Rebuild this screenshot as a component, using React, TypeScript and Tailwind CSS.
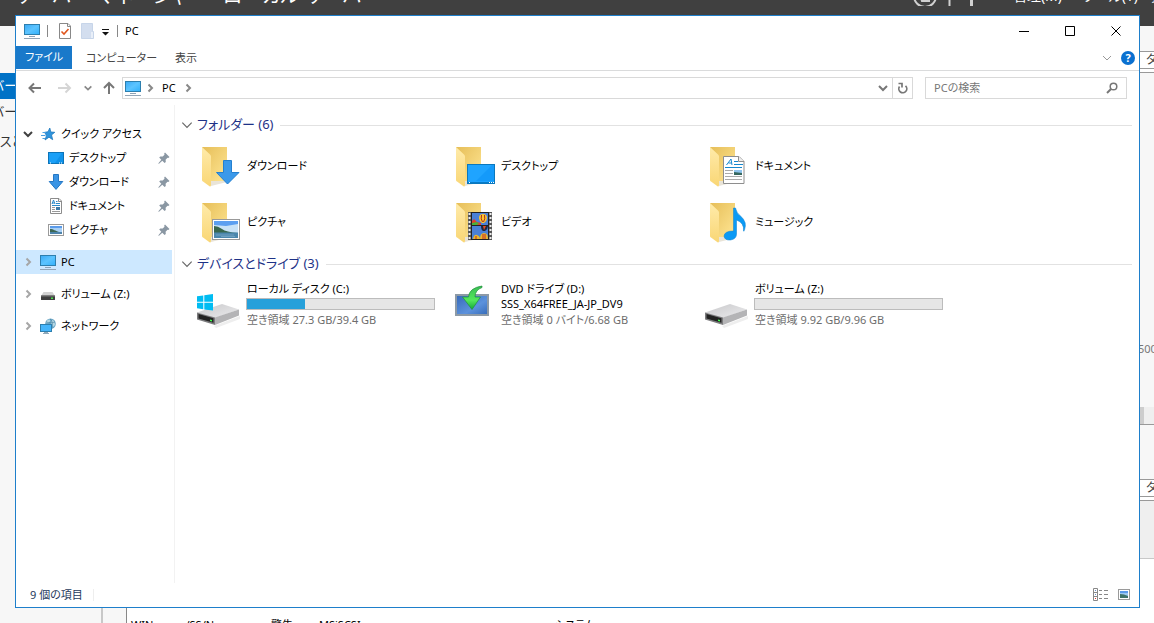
import React, { ReactNode } from 'react';

const PcIcon = ({ className = 'w-4 h-4' }: { className?: string }) => (
  <svg className={className} viewBox="0 0 16 16" aria-hidden="true">
    <defs>
      <linearGradient id="scr" x1="0" y1="0" x2="1" y2="1">
        <stop offset="0" stopColor="#3aa9f5" />
        <stop offset="0.5" stopColor="#5cc4ff" />
        <stop offset="1" stopColor="#2fb0fb" />
      </linearGradient>
    </defs>
    <rect x="0.5" y="1.5" width="15" height="10" fill="url(#scr)" stroke="#2d7fae" />
    <rect x="5" y="13" width="6" height="1" fill="#8fa3b5" />
    <rect x="0" y="15" width="16" height="1" fill="#93a5b6" />
  </svg>
);

const DesktopIcon = () => (
  <svg className="h-4 w-4" viewBox="0 0 16 16" aria-hidden="true">
    <rect x="0.5" y="2.5" width="15" height="11" fill="#1ba0f7" stroke="#0d74b8" />
    <path d="M7 13 14 3h1v10z" fill="#0f92ea" />
    <path d="M2 13h1M11 13h1M13 13h1" stroke="#fff" />
  </svg>
);

const ArrowDownIcon = () => (
  <svg className="h-4 w-4" viewBox="0 0 16 16" aria-hidden="true">
    <path d="M5.5.5h5v7h4.3L8 15.4 1.200 7.500H5.500z" fill="#3a94e4" stroke="#2577c4" />
  </svg>
);

const DocumentIcon = () => (
  <svg className="h-4 w-4" viewBox="0 0 16 16" aria-hidden="true">
    <path d="M2.500.5h8.500l2.500 2.500v12.500h-11z" fill="#fff" stroke="#8c8c8c" />
    <path d="M10.500.5v3h3" fill="none" stroke="#8c8c8c" />
    <path d="m4 6 1.500-4L7 6M4 5h2.500M8 3.500h1.500M8 5.500h4M4 7.500h8" stroke="#2b8ac9" fill="none" />
    <path d="M4 9.500h3M4 11.500h3M4 13.500h8" stroke="#999" />
    <rect x="8" y="9" width="4" height="3" fill="#3d7ba8" />
  </svg>
);

const PictureIcon = ({ className = 'w-4 h-4' }: { className?: string }) => (
  <svg className={className} viewBox="0 0 16 16" aria-hidden="true">
    <rect x="0.5" y="2.500" width="15" height="11" fill="#fff" stroke="#9a9a9a" />
    <rect x="2" y="4" width="12" height="8" fill="#a9d0f5" />
    <path d="M2 4h12v2H2z" fill="#5b9bea" />
    <path d="M2 7c4 0 5 2 9 3H2z" fill="#3c6755" />
    <path d="M2 10h12v2H2z" fill="#4c83ab" />
  </svg>
);

const DriveIcon = () => (
  <svg className="h-4 w-4" viewBox="0 0 16 16" aria-hidden="true">
    <path d="M3.500 6h9L15 10H1z" fill="#d2d2d2" />
    <rect x="1" y="9.500" width="14" height="4.500" rx="0.500" fill="#3e3e3e" />
    <rect x="1" y="9.500" width="14" height="1" fill="#777" />
    <rect x="11" y="11.500" width="2" height="1.500" fill="#4be04b" />
  </svg>
);

const NetworkIcon = () => (
  <svg className="h-4 w-4" viewBox="0 0 16 16" aria-hidden="true">
    <circle cx="10.500" cy="5.800" r="5.300" fill="#6aa6c6" />
    <path d="M7 2.500c2-2 4-1 3 1L8 5 6 5zM12 2c2 0 3 3 3 5l-2 2-2-4z" fill="#b4d6e2" />
    <path d="M10 1c3 2 3 7 1 10M6 4c3 1 6 1 9 0" stroke="#467f9e" fill="none" strokeWidth="0.600" />
    <rect x="0.500" y="6.500" width="11" height="7" fill="#45b5fb" stroke="#2d7fae" />
    <path d="M4 14.500h4M3 15.500h6" stroke="#8fa9bb" />
  </svg>
);

const StarIcon = () => (
  <svg className="h-4 w-4" viewBox="0 0 16 16" aria-hidden="true">
    <path d="m9.800 2 1 4 4 .3-3.300 2.600 1.200 4.800-3.700-2.500-4 2.800 1.500-4.500-2-3.200 3.500-.5z" fill="#2e94dd" stroke="#2078bd" strokeWidth="0.800" />
    <path d="M2.500 6.500H6M1 9.500h4.500M2.500 12.500h2.500" stroke="#4a9fe0" />
  </svg>
);

const PinIcon = () => (
  <svg className="h-3 w-3" viewBox="0 0 12 12" aria-hidden="true">
    <path d="M7 .5 11.500 5l-1.200 1-.8-.2-1.900 1.900.2 2.200-1.200 1.100-2.300-2.300L1 11.800l-.8-.2 3.100-3.900L1.200 5.600l1.100-1.200 2.400.2L6.500 2.800l-.3-1.200z" fill="#8a97a3" />
  </svg>
);

const Chevron = ({ dir, className }: { dir: 'right' | 'down'; className: string }) => (
  <svg className={className} viewBox="0 0 12 12" fill="none" stroke="currentColor" aria-hidden="true">
    <path d={dir === 'right' ? 'M4.500 2.500 8 6l-3.500 3.500' : 'M2 4l4 4 4-4'} />
  </svg>
);

const FolderIcon = ({ children }: { children: ReactNode }) => (
  <svg className="h-12 w-12 shrink-0" viewBox="0 0 48 48" aria-hidden="true">
    <defs>
      <linearGradient id="fback" x1="0" y1="0" x2="1" y2="1">
        <stop offset="0" stopColor="#e6be58" />
        <stop offset="1" stopColor="#ffe694" />
      </linearGradient>
      <linearGradient id="ffront" x1="0" y1="0" x2="0" y2="1">
        <stop offset="0" stopColor="#ffebaa" />
        <stop offset="1" stopColor="#f9d675" />
      </linearGradient>
    </defs>
    <path d="M6 5h25v34H14z" fill="url(#fback)" />
    <path d="M14 39h17v1l-16 4z" fill="#e9e4d8" />
    <path d="M6 5l8 7.500q1 1 1 2V43q0 2-1.500 1.200L7 39.500q-1-.5-1-1.500z" fill="url(#ffront)" />
    {children}
  </svg>
);

const art: Record<string, ReactNode> = {
  download: <path d="M27.500 18.500h8v12h7.500L31.500 42 20.500 30.500h7z" fill="#3b99ea" stroke="#2480d0" />,
  desktop: (
    <>
      <rect x="17.500" y="22.500" width="27" height="19" fill="#1fa4ff" stroke="#0b78bd" />
      <path d="M26 39 42 23h2v16z" fill="#149afa" />
      <path d="M18 40.500h26" stroke="#087bc8" />
      <path d="M19 40.500h1M39 40.500h1M41 40.500h1M43 40.500h1" stroke="#fff" />
    </>
  ),
  document: (
    <>
      <path d="M19.500 14.500H35l5 5v22H19.500z" fill="#fff" stroke="#8e8e8e" />
      <path d="M34.500 14.500v5H40" fill="#eee" stroke="#8e8e8e" />
      <path d="m22.500 23 4.500-6 1 6m-3.500-2h3M30 19.500h4M30 22.500h9M21 25.500h17" stroke="#1588cf" fill="none" />
      <path d="M21 28.500h8M21 31.500h8M21 34.500h17M21 37.500h17" stroke="#aaa" />
      <rect x="30" y="28" width="8" height="5" fill="#8fc4ee" />
      <path d="M30 30l8 1v2h-8z" fill="#37685f" />
    </>
  ),
  picture: (
    <>
      <rect x="16.500" y="21.500" width="27" height="20" fill="#fff" stroke="#999" />
      <rect x="18" y="23" width="24" height="17" fill="#c9e2f6" />
      <path d="M18 23h24v3l-12 2-12-1z" fill="#5c9ff0" />
      <path d="M18 28q4 0 8 3t16 4H18z" fill="#38674e" />
      <path d="M18 34.500h24V40H18z" fill="#4b87ad" />
      <path d="M20 37h18M25 38.500h14" stroke="#8ab4cc" strokeWidth="0.600" />
    </>
  ),
  video: (
    <>
      <path d="M18 14h24v28H18z" fill="#555" />
      <path d="M19.500 15v27M40.500 15v27" stroke="#eee" strokeWidth="2" strokeDasharray="2 2" />
      <path d="M21 14h18v28H21z" fill="#222" />
      <path d="M22 15h16v12H22zM22 28h16v13H22z" fill="#4a80d6" />
      <path d="M22 23l2-2 3 3 4 1v2h-9z" fill="#e0402a" />
      <path d="M22 25l5-1 2 2-3 1h-4z" fill="#48b339" />
      <path d="M29 20a4 4 0 1 1 8 0q0 3-3 5h-2q-3-2-3-5z" fill="#ffc52c" />
      <path d="M31.500 17q-1 4 1 7m2-7q1 4-1 7" stroke="#a42e26" fill="none" />
      <path d="M31 28h7q0 3-3 5h-2q-2-1-2-5z" fill="#1d2840" />
      <path d="M33 28l1 4 2-4" fill="#e84b22" />
      <path d="M23 41q1-5 4-4t3 4zM30 41q0-6 4-6t4 6z" fill="#e9b72c" />
      <path d="M33 36v5m2-5v5m-9-3v3" stroke="#c02c26" />
    </>
  ),
  music: (
    <path d="M29.500 10h2q1 5 5 8 7 6 4 14-1 2-1 1 1-8-7-11v14q0 5-6 6-6 .5-6.500-4 .5-5 9.500-5z" fill="#0b9af5" stroke="#087fce" strokeWidth="0.500" />
  ),
};

const BigDrive = ({ windows = false }: { windows?: boolean }) => (
  <svg className="h-12 w-12 shrink-0" viewBox="0 0 48 48" aria-hidden="true">
    <defs>
      <linearGradient id="dtop" x1="0" y1="0" x2="1" y2="1">
        <stop offset="0" stopColor="#c8c8ca" />
        <stop offset="1" stopColor="#ececee" />
      </linearGradient>
    </defs>
    <path d="M18 46 44 36v3L20 48z" fill="#eee" />
    <path d="M1 32.500 26 24l17 5.500L19 38z" fill="url(#dtop)" />
    <path d="M19 37.500 43 29.500v6L19 45z" fill="#b4b4b6" />
    <path d="M1 32.500 19 37.500V45L1 39.500z" fill="#7c7c7e" />
    <path d="M2.500 34 17.500 38.300v4.500L2.500 38.500z" fill="#222" />
    <path d="M14 39.500l2 .5v1.500l-2-.5z" fill="#3dff4d" />
    {windows && (
      <path d="M1 16.300 7.300 15.400v6.400H1zM8.300 15.200 17 14v7.800H8.300zM1 22.800h6.300v6.400L1 28.300zM8.300 22.800H17v7.800l-8.700-1.200z" fill="#00bcf2" />
    )}
  </svg>
);

const DvdIcon = () => (
  <svg className="h-12 w-12 shrink-0" viewBox="0 0 48 48" aria-hidden="true">
    <defs>
      <linearGradient id="dvd" x1="0" y1="0" x2="1" y2="1">
        <stop offset="0" stopColor="#3568b8" />
        <stop offset="0.600" stopColor="#5c92dc" />
        <stop offset="1" stopColor="#356ab8" />
      </linearGradient>
      <linearGradient id="grn" x1="0" y1="0" x2="0" y2="1">
        <stop offset="0" stopColor="#39bd53" />
        <stop offset="0.600" stopColor="#55e85c" />
        <stop offset="1" stopColor="#12a837" />
      </linearGradient>
    </defs>
    <rect x="6" y="15" width="32" height="20" fill="url(#dvd)" stroke="#8d9aa6" strokeWidth="2" />
    <path d="M32 6q-13 2-13.500 11h-6L22 29.500 30.500 17h-5.500q0-7 7-9.500z" fill="url(#grn)" stroke="#20913b" strokeWidth="0.700" />
  </svg>
);

const quick = [
  { name: 'デスクトップ', icon: <DesktopIcon /> },
  { name: 'ダウンロード', icon: <ArrowDownIcon /> },
  { name: 'ドキュメント', icon: <DocumentIcon /> },
  { name: 'ピクチャ', icon: <PictureIcon /> },
];

const folders = [
  { name: 'ダウンロード', art: 'download' },
  { name: 'デスクトップ', art: 'desktop' },
  { name: 'ドキュメント', art: 'document' },
  { name: 'ピクチャ', art: 'picture' },
  { name: 'ビデオ', art: 'video' },
  { name: 'ミュージック', art: 'music' },
];

const drives = [
  { name: 'ローカル ディスク (C:)', free: '空き領域 27.3 GB/39.4 GB', icon: <BigDrive windows />, used: 31 },
  { name: 'DVD ドライブ (D:)', label: 'SSS_X64FREE_JA-JP_DV9', free: '空き領域 0 バイト/6.68 GB', icon: <DvdIcon /> },
  { name: 'ボリューム (Z:)', free: '空き領域 9.92 GB/9.96 GB', icon: <BigDrive />, used: 0 },
];

const GroupHeader = ({ title }: { title: string }) => (
  <h2 className="flex h-5 items-center text-[13px] text-[#1e3287]">
    <button className="flex items-center gap-[3px]" aria-expanded="true">
      <Chevron dir="down" className="h-3.5 w-3.5 text-[#666]" />
      {title}
    </button>
    <span className="ml-[7px] h-px flex-1 bg-[#e2e2e2]" />
  </h2>
);

const TreeRoot = ({ name, icon, open = false, selected = false }: { name: string; icon: ReactNode; open?: boolean; selected?: boolean }) => (
  <button className={`flex h-6 w-full items-center pl-1.5 ${selected ? 'bg-[#cde8ff]' : ''}`}>
    <Chevron dir={open ? 'down' : 'right'} className={`mr-1.5 h-3 w-3 ${open ? 'stroke-2 text-[#404040]' : 'stroke-2 text-[#a6a6a6]'}`} />
    {icon}
    <span className="ml-[5px]">{name}</span>
  </button>
);

const Backdrop = () => (
  <div className="flex h-full flex-col bg-[#f7f7f7]" aria-hidden="true">
    <div className="flex h-[26px] shrink-0 items-end justify-between overflow-hidden bg-[#404040] text-white">
      <span className="mb-4 ml-3.5 whitespace-pre text-xl leading-7">サーバー マネージャー   ローカル サーバー</span>
      <span className="-mr-6 mb-5 flex items-end whitespace-nowrap text-sm leading-5">
        <svg className="mr-2 h-6 w-6" viewBox="0 0 24 24" fill="none" stroke="#d0d0d0" strokeWidth="2">
          <circle cx="12" cy="14" r="11" />
          <path d="M8 16h8v3H9z" />
        </svg>
        <svg className="mr-9 h-6 w-8" viewBox="0 0 32 24" fill="none" stroke="#d0d0d0">
          <path d="M4.500 0v24" strokeWidth="2" />
          <path d="M26.500 0v24" strokeWidth="3" />
        </svg>
        <span className="mr-5">管理(M)</span><span className="mr-3">ツール(T)</span>表示
      </span>
    </div>
    <div className="flex min-h-0 flex-1">
      <div className="w-[103px] shrink-0 overflow-hidden border-r-2 border-[#c8c8c8] pt-[47px] text-[13px]">
        <div className="h-[26px] bg-[#0072c6] leading-6 text-white"><span className="-ml-2">バー</span></div>
        <div className="h-6 leading-6 text-[#333]"><span className="-ml-2">バー</span></div>
        <div className="leading-9 text-[#333]">スと</div>
      </div>
      <div className="ml-[23px] flex min-w-0 flex-1 flex-col overflow-hidden border-l border-[#888] text-xs text-[#444]">
        <div className="h-[25px] shrink-0" />
        <div className="flex h-[18px] shrink-0 justify-end border-y border-[#999] bg-white"><span className="w-2 whitespace-nowrap">タスク</span></div>
        <div className="h-1 shrink-0 border-b border-[#999] bg-white" />
        <div className="flex h-[334px] shrink-0 items-end justify-end pb-[50px] text-[11px] text-[#777]"><span className="w-4 whitespace-nowrap">500</span></div>
        <div className="flex h-[18px] shrink-0 justify-end border-b border-[#999] bg-[#efefef]"><span className="mr-[10px] w-2 bg-[#cdcdcd]" /></div>
        <div className="h-[54px] shrink-0" />
        <div className="flex h-[18px] shrink-0 justify-end border-y border-[#999] bg-white"><span className="w-2 whitespace-nowrap">タスク</span></div>
        <div className="h-1 shrink-0 border-b border-[#999] bg-white" />
        <div className="h-[58px] shrink-0 border-b border-[#c8c8c8] bg-[#efefef]" />
        <div className="flex flex-1 items-end overflow-hidden bg-white text-black">
          <div className="flex h-1.5 whitespace-pre pl-1 text-[11px] leading-4">
            <span className="w-[140px]">WIN-          /SS/N</span>
            <span className="w-12">警告</span>
            <span className="w-[236px]">MSiSCSI</span>
            <span>システム</span>
          </div>
        </div>
      </div>
    </div>
  </div>
);

export default function App() {
  return (
    <div className="relative h-screen overflow-hidden font-['Noto_Sans','Noto_Sans_CJK_JP',sans-serif] [font-feature-settings:'palt']">
      <Backdrop />
      <main className="absolute top-[15px] right-[14px] bottom-[15px] left-[15px] flex flex-col border border-[#1e7fcb] bg-white text-[11px] text-black">
        <header className="flex h-[30px] shrink-0 items-center pl-2">
          <PcIcon />
          <span className="ml-[7px] h-3 w-px bg-[#888]" />
          <button className="ml-[9px]" aria-label="プロパティ">
            <svg className="h-4 w-4" viewBox="0 0 16 16">
              <path d="M2.500.5H11l2.500 2.500v12.500h-11z" fill="#fff" stroke="#888" />
              <path d="M10.500.5v3h3" fill="none" stroke="#888" />
              <path d="m4.500 8.500 2.500 2.500 4.500-5" fill="none" stroke="#e0561e" strokeWidth="1.600" />
            </svg>
          </button>
          <button className="ml-[7px]" aria-label="新しいフォルダー">
            <svg className="h-4 w-4" viewBox="0 0 16 16">
              <path d="M1.500.5h11v8h1v7h-12z" fill="#d3deef" stroke="#c7d5e9" />
              <path d="M11 9h2v6h-2z" fill="#e9eff8" />
            </svg>
          </button>
          <button className="ml-1.5" aria-label="カスタマイズ">
            <svg className="h-3 w-2" viewBox="0 0 8 12"><path d="M0 4h7v1H0zM0 7h7L3.500 10.500z" fill="#111" /></svg>
          </button>
          <span className="mr-[7px] ml-[7px] h-3 w-px bg-[#888]" />
          <h1>PC</h1>
          <div className="ml-auto flex h-full">
            {[
              { label: '最小化', d: 'M1 6.500h10' },
              { label: '最大化', d: 'M1.500 1.500h9v9h-9z' },
              { label: '閉じる', d: 'm1.500 1.500 9 9m0-9-9 9' },
            ].map((b) => (
              <button key={b.label} aria-label={b.label} className="flex w-[46px] items-center justify-center">
                <svg className="h-3 w-3" viewBox="0 0 12 12" fill="none" stroke="#000"><path d={b.d} /></svg>
              </button>
            ))}
          </div>
        </header>

        <nav className="flex h-[25px] shrink-0 items-start border-b border-[#dadbdc] text-[#444]">
          <button className="h-[23px] w-14 bg-[#1979ca] text-white">ファイル</button>
          <button className="h-6 px-3.5">コンピューター</button>
          <button className="h-6 px-1">表示</button>
          <div className="ml-auto flex h-6 items-center gap-2 pr-1">
            <button aria-label="リボンの展開"><Chevron dir="down" className="block h-3 w-3 text-[#999]" /></button>
            <button aria-label="ヘルプ" className="h-3.5 w-3.5 rounded-full bg-[#0a70d0] text-[11px] leading-[14px] font-bold text-white">?</button>
          </div>
        </nav>

        <div className="flex h-[34px] shrink-0 items-center pr-3 pl-[11px] text-[#777]">
          <button aria-label="戻る"><svg className="h-4 w-4" viewBox="0 0 16 16" fill="none" stroke="#777" strokeWidth="2"><path d="M2 8h12M7 3.500 2.500 8 7 12.500" /></svg></button>
          <button aria-label="進む" className="ml-3.5"><svg className="h-4 w-4" viewBox="0 0 16 16" fill="none" stroke="#d5d5d5" strokeWidth="2"><path d="M1 8h12M8.500 3.500 13 8l-4.500 4.500" /></svg></button>
          <button aria-label="履歴" className="ml-2.5"><Chevron dir="down" className="h-2.5 w-2.5 stroke-2 text-[#888]" /></button>
          <button aria-label="上へ" className="ml-2"><svg className="h-4 w-4" viewBox="0 0 16 16" fill="none" stroke="#777" strokeWidth="2"><path d="M8 14V3M3 8l5-5 5 5" /></svg></button>
          <div className="ml-[5px] flex h-[22px] flex-1 items-center border border-[#d9d9d9] pl-0.5">
            <PcIcon />
            <Chevron dir="right" className="ml-[3px] h-3 w-3 stroke-2 text-[#888]" />
            <button className="mx-1.5 text-black">PC</button>
            <Chevron dir="right" className="h-3 w-3 stroke-2 text-[#888]" />
            <button aria-label="以前の場所" className="ml-auto pr-[3px]"><Chevron dir="down" className="h-3 w-3 stroke-2 text-[#777]" /></button>
            <button aria-label="更新" className="flex h-full w-5 items-center justify-center border-l border-[#d9d9d9]">
              <svg className="h-3 w-3" viewBox="0 0 12 12" fill="none" stroke="#777" strokeWidth="1.700"><path d="M1.500 1.500H5V5.500M2.500 4.500A4 4 0 1 0 8.500 3.800" /></svg>
            </button>
          </div>
          <label className="ml-3 flex h-[22px] w-[202px] items-center border border-[#d9d9d9] pr-2 pl-2">
            <input aria-label="PCの検索" placeholder="PCの検索" className="min-w-0 flex-1 outline-none placeholder:text-[#777]" />
            <svg className="h-3 w-3" viewBox="0 0 12 12" fill="none" stroke="#777" strokeWidth="1.500"><circle cx="7.500" cy="4.500" r="3.300" /><path d="M5 7 1 11" strokeWidth="2" /></svg>
          </label>
        </div>

        <div className="flex min-h-0 flex-1">
          <aside className="w-[159px] shrink-0 border-r border-[#f2f2f2] pt-[17px] pr-[2px]">
            <TreeRoot name="クイック アクセス" icon={<StarIcon />} open />
            {quick.map((q) => (
              <button key={q.name} className="flex h-6 w-full items-center pr-0.5 pl-8">
                {q.icon}
                <span className="mr-auto ml-[5px]">{q.name}</span>
                <PinIcon />
              </button>
            ))}
            <div className="mt-2 flex flex-col gap-2">
              <TreeRoot name="PC" icon={<PcIcon />} selected />
              <TreeRoot name="ボリューム (Z:)" icon={<DriveIcon />} />
              <TreeRoot name="ネットワーク" icon={<NetworkIcon />} />
            </div>
          </aside>

          <section className="min-w-0 flex-1 pt-2.5 pr-[7px] pl-[5px]">
            <GroupHeader title="フォルダー (6)" />
            <div className="mt-[7px] flex flex-wrap gap-y-2 pl-4">
              {folders.map((f) => (
                <button key={f.name} className="flex h-12 w-[254px] text-left">
                  <FolderIcon>{art[f.art]}</FolderIcon>
                  <span className="mt-4 ml-[3px] leading-4">{f.name}</span>
                </button>
              ))}
            </div>
            <div className="mt-2"><GroupHeader title="デバイスとドライブ (3)" /></div>
            <div className="mt-1.5 flex flex-wrap pl-4">
              {drives.map((d) => (
                <button key={d.name} className="flex h-12 w-[254px] text-left">
                  {d.icon}
                  <span className="ml-[3px] flex flex-col leading-4">
                    <span className="mt-px">{d.name}</span>
                    {d.label ? (
                      <span className="h-4 leading-[14px] whitespace-nowrap">{d.label}</span>
                    ) : (
                      <span className="mt-px mb-0.5 -ml-px block h-[13px] w-[189px] border border-[#bcbcbc] bg-[#e6e6e6]">
                        <span className="block h-full bg-[#26a0da]" style={{ width: `${d.used}%` }} />
                      </span>
                    )}
                    <span className="whitespace-nowrap text-[#6d6d6d]">{d.free}</span>
                  </span>
                </button>
              ))}
            </div>
          </section>
        </div>

        <footer className="flex h-6 shrink-0 items-center pr-2 pl-3.5 text-[#1e395b]">
          <span>9 個の項目</span>
          <span className="ml-2.5 h-3 w-px bg-[#eee]" />
          <button className="ml-auto" aria-label="詳細表示">
            <svg className="h-4 w-4" viewBox="0 0 16 16" fill="none" stroke="#888">
              <path d="M.5 1.500h4v12h-4zM.5 5.500h4M.5 9.500h4M6 3.500h3M11 3.500h4M6 7.500h3M11 7.500h4M6 11.500h3M11 11.500h4" />
              <path d="M2 3.500h1M2 7.500h1" stroke="#6a8fc8" />
              <path d="M2 11.500h1" stroke="#e03030" />
            </svg>
          </button>
          <button className="ml-2" aria-label="大きいアイコン">
            <svg className="h-3.5 w-3.5" viewBox="0 0 14 14">
              <rect x="1.500" y="1.500" width="11" height="10" fill="#fff" stroke="#9a9a9a" />
              <rect x="3" y="3" width="8" height="7" fill="#9cc8f2" />
              <path d="M3 3h8v2H3z" fill="#5b9bea" />
              <path d="M3 6q4 0 8 2v2H3z" fill="#3f7368" />
            </svg>
          </button>
        </footer>
      </main>
    </div>
  );
}
